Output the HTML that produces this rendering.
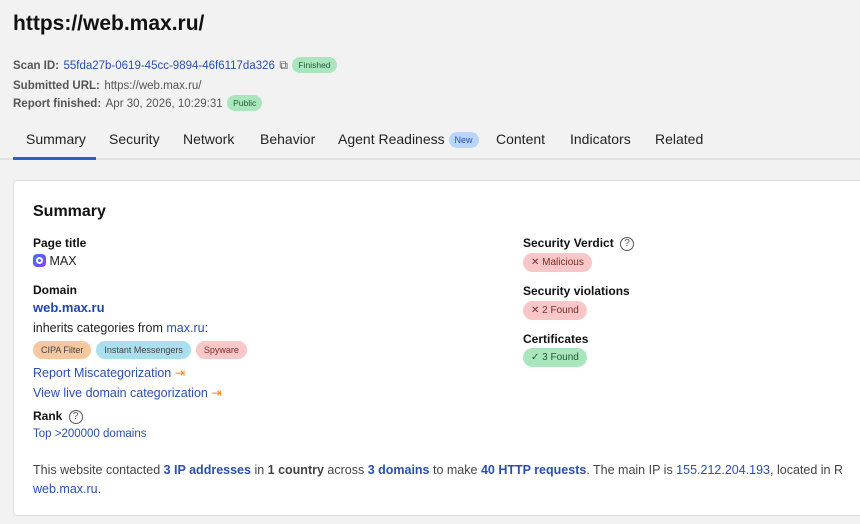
<!DOCTYPE html>
<html><head><meta charset="utf-8"><style>
*{box-sizing:border-box;margin:0;padding:0}
body{width:860px;height:524px;overflow:hidden;background:#f2f2f2;font-family:"Liberation Sans",sans-serif;color:#222;position:relative}
.a{position:absolute;white-space:nowrap}
.lbl{font-weight:bold;color:#555;font-size:11.5px}
.v{color:#555;font-size:11.5px}
.lnk{color:#2a4fb0}
.pill{display:inline-block;border-radius:10px;font-size:8.5px;padding:3px 6px;vertical-align:middle}
.tab{font-size:14px;color:#222;top:131px}
.card{position:absolute;left:13px;top:180px;width:860px;height:336px;background:#fff;border:1px solid #e0e0e0;border-radius:4px}
.h{font-weight:bold;font-size:12px;color:#111}
.t{font-size:12.5px}
.cat{display:inline-block;border-radius:11px;font-size:9px;padding:4px 8px;color:#444;margin-right:5px}
.q{display:inline-block;width:14px;height:14px;border:1px solid #555;border-radius:50%;font-size:10px;text-align:center;line-height:12px;font-weight:normal;color:#555;vertical-align:middle;margin-left:3px}
.bad{background:#f9c7c7;color:#7a2a2a;border-radius:11px;font-size:10px;padding:4px 8px;display:inline-block}
.ok{background:#a9e6bd;color:#245b35;border-radius:11px;font-size:10px;padding:4px 8px;display:inline-block}
</style></head><body>
<div class="a" style="left:13px;top:12px;font-size:21px;font-weight:bold;color:#111">https://web.max.ru/</div>
<div class="a" style="left:13px;top:56px"><span class="lbl">Scan ID:</span> <span class="v lnk">55fda27b-0619-45cc-9894-46f6117da326</span> <span style="font-size:12px;color:#555">⧉</span> <span class="pill" style="background:#a9e6bd;color:#245b35">Finished</span></div>
<div class="a" style="left:13px;top:76px"><span class="lbl">Submitted URL:</span> <span class="v">https://web.max.ru/</span></div>
<div class="a" style="left:13px;top:94px"><span class="lbl">Report finished:</span> <span class="v">Apr 30, 2026, 10:29:31</span> <span class="pill" style="background:#a9e6bd;color:#245b35">Public</span></div>
<div class="a tab" style="left:26px">Summary</div>
<div class="a tab" style="left:109px">Security</div>
<div class="a tab" style="left:183px">Network</div>
<div class="a tab" style="left:260px">Behavior</div>
<div class="a tab" style="left:338px">Agent Readiness <span class="pill" style="background:#b8d6fb;color:#2a4fb0;font-size:9px">New</span></div>
<div class="a tab" style="left:496px">Content</div>
<div class="a tab" style="left:570px">Indicators</div>
<div class="a tab" style="left:655px">Related</div>
<div class="a" style="left:0;top:158px;width:860px;height:2px;background:#e2e2e2"></div>
<div class="a" style="left:13px;top:157px;width:83px;height:3px;background:#2a63c8"></div>
<div class="card"></div>
<div class="a" style="left:33px;top:203px;font-size:16px;font-weight:bold;color:#111">Summary</div>
<div class="a h" style="left:33px;top:236px">Page title</div>
<div class="a t" style="left:33px;top:254px"><span style="display:inline-block;width:13px;height:13px;border-radius:4px;background:linear-gradient(135deg,#3a7bff,#8a3cf0);vertical-align:-2px;position:relative"><span style="position:absolute;left:3px;top:3px;width:7px;height:7px;border-radius:50%;border:2px solid #fff"></span></span> MAX</div>
<div class="a h" style="left:33px;top:283px">Domain</div>
<div class="a" style="left:33px;top:300px;font-size:13px;font-weight:bold;color:#1e46b0">web.max.ru</div>
<div class="a t" style="left:33px;top:321px">inherits categories from <span class="lnk">max.ru</span>:</div>
<div class="a" style="left:33px;top:340px"><span class="cat" style="background:#f7c8a0">CIPA Filter</span><span class="cat" style="background:#a8e0ef">Instant Messengers</span><span class="cat" style="background:#f9c7c7;color:#7a2a2a">Spyware</span></div>
<div class="a t lnk" style="left:33px;top:365px">Report Miscategorization <span style="color:#f08a24">⇥</span></div>
<div class="a t lnk" style="left:33px;top:385px">View live domain categorization <span style="color:#f08a24">⇥</span></div>
<div class="a h" style="left:33px;top:409px">Rank <span class="q">?</span></div>
<div class="a lnk" style="left:33px;top:428px;font-size:11.5px">Top &gt;200000 domains</div>
<div class="a h" style="left:523px;top:236px">Security Verdict <span class="q">?</span></div>
<div class="a" style="left:523px;top:252px"><span class="bad">✕ Malicious</span></div>
<div class="a h" style="left:523px;top:284px">Security violations</div>
<div class="a" style="left:523px;top:300px"><span class="bad">✕ 2 Found</span></div>
<div class="a h" style="left:523px;top:332px">Certificates</div>
<div class="a" style="left:523px;top:347px"><span class="ok">✓ 3 Found</span></div>
<div class="a t" style="left:33px;top:463px;color:#444">This website contacted <b class="lnk">3 IP addresses</b> in <b>1 country</b> across <b class="lnk">3 domains</b> to make <b class="lnk">40 HTTP requests</b>. The main IP is <span class="lnk">155.212.204.193</span>, located in R</div>
<div class="a t lnk" style="left:33px;top:482px">web.max.ru<span style="color:#444">.</span></div>
</body></html>
